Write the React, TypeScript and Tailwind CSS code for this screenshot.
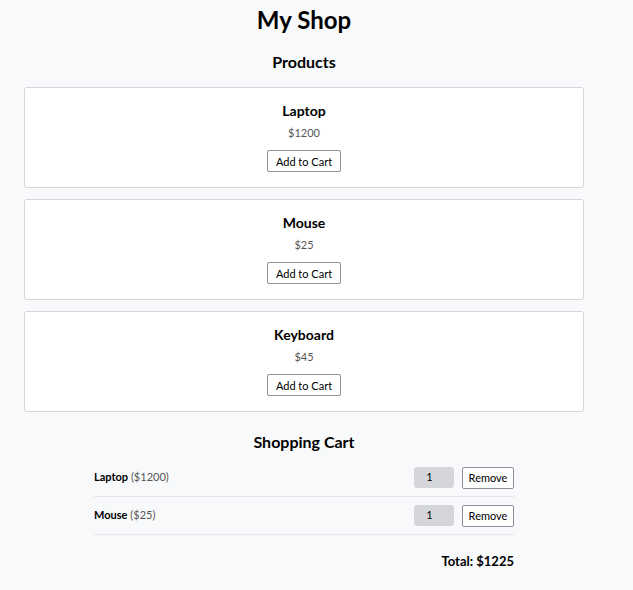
const products = [
  { name: "Laptop", price: 1200 },
  { name: "Mouse", price: 25 },
  { name: "Keyboard", price: 45 },
]

const cart = [
  { name: "Laptop", price: 1200, qty: 1 },
  { name: "Mouse", price: 25, qty: 1 },
]

const App = () => {
  const total = cart.reduce((s, i) => s + i.price * i.qty, 0)
  return (
    <div className="min-h-[590px] bg-[#f8f9fb] font-['Lato',sans-serif] text-black">
      <div className="w-[608px] px-6 pt-[5px] pb-6">
        <h1 className="text-center text-[24px] font-bold leading-[30px]">My Shop</h1>
        <h2 className="mt-[17px] text-center text-[16px] font-bold leading-5">Products</h2>
        <div className="mt-[15px] flex flex-col gap-[11px]">
          {products.map((p) => (
            <div
              key={p.name}
              className="flex h-[101px] flex-col items-center rounded-[3px] border border-[#d3d5da] bg-white pt-[13px]"
            >
              <h3 className="text-[14px] font-bold leading-5">{p.name}</h3>
              <p className="mt-[5px] text-[11px] leading-[14px] text-[#555]">${p.price}</p>
              <button className="mt-[10px] h-[22px] w-[74px] rounded-[2px] border border-[#8f8f9d] bg-white text-[11px] leading-none">
                Add to Cart
              </button>
            </div>
          ))}
        </div>
        <h2 className="mt-[20px] text-center text-[16px] font-bold leading-5">Shopping Cart</h2>
        <div className="mx-auto mt-[7px] w-[420px]">
          {cart.map((c) => (
            <div key={c.name} className="flex h-[38px] items-center justify-between border-b border-[#e5e7eb]">
              <span className="text-[11px]">
                <span className="font-bold">{c.name}</span>{" "}
                <span className="text-[#555]">(${c.price})</span>
              </span>
              <div className="flex items-center gap-2">
                <div className="flex h-[21px] w-[40px] items-center justify-center rounded-[3px] bg-[#d4d6db] pr-[9px] text-[11px]">
                  {c.qty}
                </div>
                <button className="h-[22px] w-[52px] rounded-[2px] border border-[#8f8f9d] bg-white text-[11px] leading-none">
                  Remove
                </button>
              </div>
            </div>
          ))}
          <p className="mt-[17px] text-right text-[13px] font-bold">Total: ${total}</p>
        </div>
      </div>
    </div>
  )
}

export default App
